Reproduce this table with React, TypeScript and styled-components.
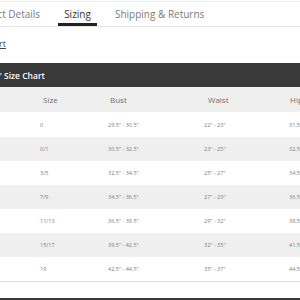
import styled, { createGlobalStyle } from "styled-components";

const GlobalStyle = createGlobalStyle`
    html, body {
        margin: 0;
        padding: 0;
        background: #ffffff;
        overflow: hidden;
    }
    body {
        font-family: "Open Sans", "Liberation Sans", sans-serif;
        color: #333333;
    }
`;

const SizeRows = [
    { size: "0", bust: '29.5" - 30.5"', waist: '22" - 23"', hip: '31.5" - 32.5"' },
    { size: "0/1", bust: '30.5" - 32.5"', waist: '23" - 25"', hip: '32.5" - 34.5"' },
    { size: "3/5", bust: '32.5" - 34.5"', waist: '25" - 27"', hip: '34.5" - 36.5"' },
    { size: "7/9", bust: '34.5" - 36.5"', waist: '27" - 29"', hip: '36.5" - 38.5"' },
    { size: "11/13", bust: '36.5" - 39.5"', waist: '29" - 32"', hip: '38.5" - 41.5"' },
    { size: "15/17", bust: '39.5" - 42.5"', waist: '32" - 35"', hip: '41.5" - 44.5"' },
    { size: "19", bust: '42.5" - 44.5"', waist: '35" - 37"', hip: '44.5" - 46.5"' },
];

const Page = styled.div`
    width: 300px;
    height: 300px;
    overflow: hidden;
    border-top: 1px solid #ececec;
    margin-top: 1px;
    box-sizing: border-box;
`;

const TabList = styled.div`
    display: flex;
    gap: 12px;
    height: 24px;
    border-bottom: 1px solid #e6e6e6;
    margin-left: -37px;
`;

const Tab = styled.div<{ $active?: boolean }>`
    display: flex;
    align-items: center;
    padding: 3px 6px 0;
    font-size: 10px;
    white-space: nowrap;
    color: ${(p) => (p.$active ? "#333333" : "#7a7a7a")};
    border-bottom: 3px solid ${(p) => (p.$active ? "#222222" : "transparent")};
`;

const ChartLink = styled.div`
    margin-top: 10px;
    height: 14px;
    font-size: 9px;
    color: #444444;
    text-decoration: underline;
    text-indent: -36px;
    white-space: nowrap;
`;

const ChartTitle = styled.div`
    margin-top: 12px;
    height: 24px;
    display: flex;
    align-items: center;
    background: #393939;
    color: #ffffff;
    font-size: 8.5px;
    font-weight: 600;
    white-space: nowrap;
    text-indent: -29px;
`;

const Row = styled.div<{ $shade?: boolean; $height: number }>`
    display: grid;
    grid-template-columns: 40px 68px 96px 85px 1fr;
    align-items: center;
    height: ${(p) => p.$height}px;
    background: ${(p) => (p.$shade ? "#efefef" : "#ffffff")};
    white-space: nowrap;
`;

const HeadCell = styled.div<{ $pad: number }>`
    padding-left: ${(p) => p.$pad}px;
    font-size: 8px;
    color: #6f6f6f;
`;

const Cell = styled.div`
    font-size: 5.5px;
    color: #7d7d7d;
`;

const TableEnd = styled.div`
    border-top: 1px solid #dddddd;
    height: 16px;
`;

const NextBar = styled.div`
    height: 6px;
    background: #393939;
`;

export default function App() {
    return (
        <>
            <GlobalStyle />
            <Page>
                <TabList>
                    <Tab>Product Details</Tab>
                    <Tab $active>Sizing</Tab>
                    <Tab>Shipping &amp; Returns</Tab>
                </TabList>
                <ChartLink>Size Chart</ChartLink>
                <ChartTitle>Juniors' Size Chart</ChartTitle>
                <Row $shade $height={25}>
                    <div />
                    <HeadCell $pad={3}>Size</HeadCell>
                    <HeadCell $pad={2}>Bust</HeadCell>
                    <HeadCell $pad={4}>Waist</HeadCell>
                    <HeadCell $pad={1}>Hip</HeadCell>
                </Row>
                {SizeRows.map((r, i) => (
                    <Row key={r.size} $shade={i % 2 === 1} $height={i === 0 ? 25 : 24}>
                        <div />
                        <Cell>{r.size}</Cell>
                        <Cell>{r.bust}</Cell>
                        <Cell>{r.waist}</Cell>
                        <Cell>{r.hip}</Cell>
                    </Row>
                ))}
                <TableEnd />
                <NextBar />
            </Page>
        </>
    );
}
